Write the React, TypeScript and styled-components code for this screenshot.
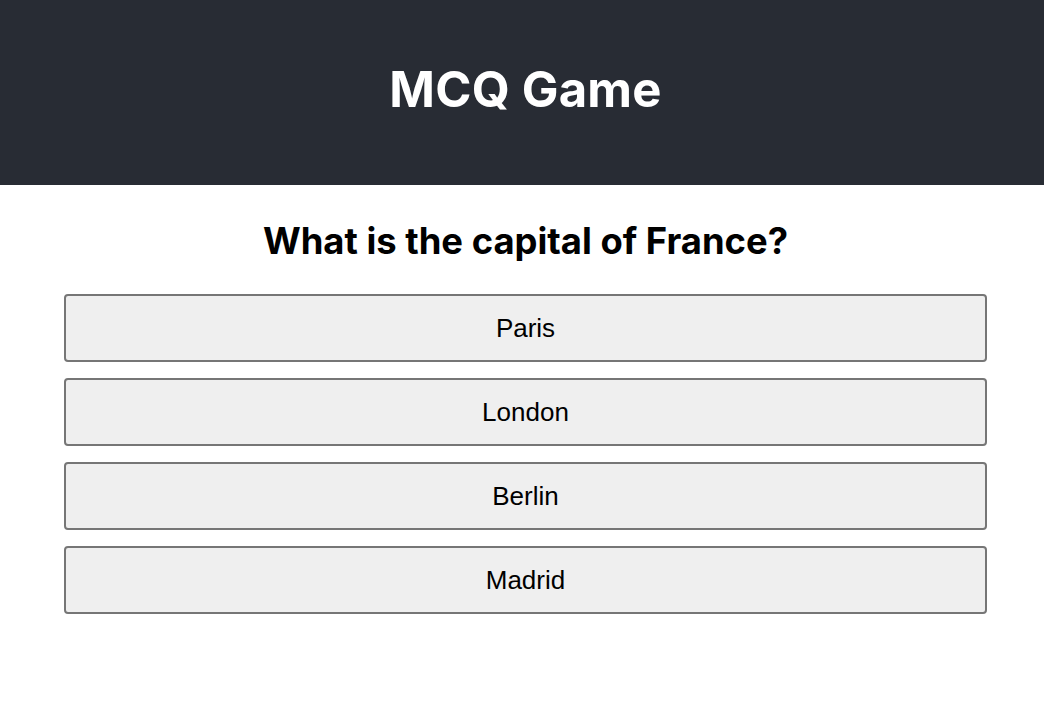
import React from "react";
import styled, { createGlobalStyle } from "styled-components";

const Global = createGlobalStyle`
  html, body { margin: 0; padding: 0; background: #ffffff; }
  body { font-family: Inter, "Liberation Sans", sans-serif; }
`;

const Header = styled.header`
  background: #282c34;
  height: 185px;
  display: flex;
  align-items: center;
  justify-content: center;
  padding-left: 7px;
`;

const Title = styled.h1`
  margin: 0;
  color: #ffffff;
  font-family: Inter, sans-serif;
  font-weight: 700;
  font-size: 49px;
  line-height: 1;
  padding-bottom: 6px;
  letter-spacing: 0.2px;
`;

const Main = styled.main`
  display: flex;
  flex-direction: column;
  align-items: center;
  padding: 0 57px 0 64px;
`;

const Question = styled.h2`
  margin: 34px 0 0;
  font-family: Inter, sans-serif;
  font-weight: 700;
  font-size: 36.4px;
  line-height: 45px;
  color: #000000;
`;

const Options = styled.div`
  width: 100%;
  display: flex;
  flex-direction: column;
  gap: 16px;
  margin-top: 30px;
`;

const Option = styled.button`
  width: 100%;
  height: 68px;
  box-sizing: border-box;
  background: #efefef;
  border: 2px solid #767676;
  border-radius: 4px;
  font-family: "Liberation Sans", Arial, sans-serif;
  font-size: 26px;
  color: #000000;
  cursor: pointer;
  padding: 0;
`;

const answers = ["Paris", "London", "Berlin", "Madrid"];

export default function App() {
  return (
    <>
      <Global />
      <Header>
        <Title>MCQ Game</Title>
      </Header>
      <Main>
        <Question>What is the capital of France?</Question>
        <Options>
          {answers.map((a) => (
            <Option key={a}>{a}</Option>
          ))}
        </Options>
      </Main>
    </>
  );
}
